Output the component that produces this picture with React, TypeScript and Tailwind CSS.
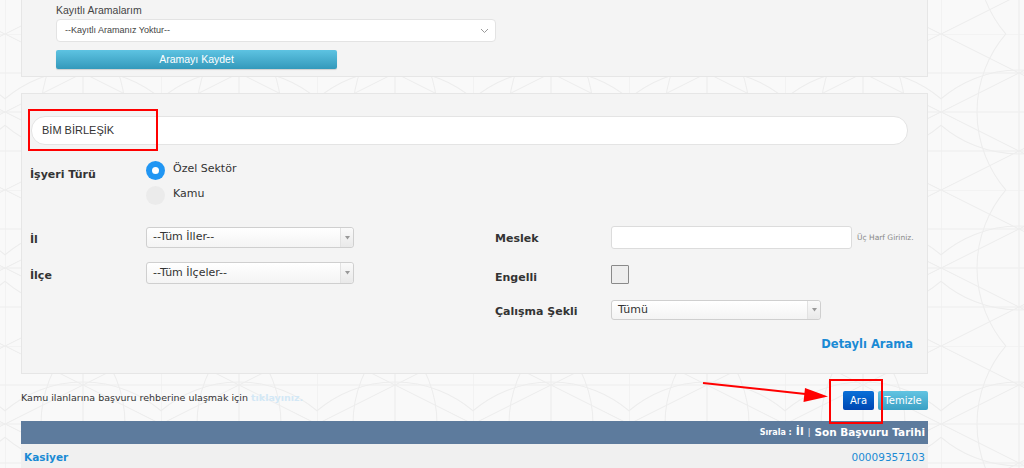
import React from "react";

const dv = { fontFamily: '"DejaVu Sans", Verdana, sans-serif' };
const ls = { fontFamily: '"Liberation Sans", Arial, sans-serif' };

function Bg() {
  return (
    <svg className="absolute inset-0 h-full w-full" width="1024" height="468">
      <defs>
        <pattern id="geo" width="156" height="156" patternUnits="userSpaceOnUse" x="5" y="34">
          <g fill="none" stroke="#ededed" strokeWidth="1.1">
            <line x1="0" y1="0" x2="156" y2="0" />
            <line x1="0" y1="39" x2="156" y2="39" />
            <line x1="0" y1="78" x2="156" y2="78" />
            <line x1="0" y1="117" x2="156" y2="117" />
            <line x1="0" y1="0" x2="0" y2="156" />
            <line x1="78" y1="0" x2="78" y2="156" />
            <line x1="0" y1="0" x2="156" y2="78" />
            <line x1="0" y1="78" x2="156" y2="156" />
            <line x1="0" y1="78" x2="156" y2="0" />
            <line x1="0" y1="156" x2="156" y2="78" />
            <circle cx="0" cy="78" r="120" />
            <circle cx="156" cy="78" r="120" />
            <circle cx="78" cy="0" r="120" />
            <circle cx="78" cy="156" r="120" />
          </g>
        </pattern>
      </defs>
      <rect width="1024" height="468" fill="#f9f9f9" />
      <rect width="1024" height="468" fill="url(#geo)" />
    </svg>
  );
}

function Select({ text, w }: { text: string; w: string }) {
  return (
    <div
      className={`${w} h-full flex items-center rounded-[3px] border border-[#cfcfcf] bg-gradient-to-b from-white to-[#f4f4f4]`}
    >
      <span className="flex-1 pl-[6px] text-[11px] text-[#333]" style={dv}>
        {text}
      </span>
      <span className="h-full w-[13px] border-l border-[#e2e2e2] flex items-center justify-center bg-gradient-to-b from-[#fafafa] to-[#e9e9e9] rounded-r-[3px]">
        <svg width="5" height="4" viewBox="0 0 5 4">
          <path d="M0 0 L5 0 L2.5 3.5 Z" fill="#999" />
        </svg>
      </span>
    </div>
  );
}

export default function App() {
  return (
    <div className="relative w-[1024px] h-[468px] overflow-hidden">
      <Bg />
      <div className="relative ml-[21px] w-[907px]">
        {/* Panel 1 */}
        <div className="h-[77px] border-x border-b border-[#e6e6e6] bg-[#f4f4f4] pl-[34px] pt-[3px]">
          <div className="text-[10.5px] leading-[15px] text-[#444]" style={ls}>
            Kayıtlı Aramalarım
          </div>
          <div className="mt-[1px] w-[440px] h-[23px] rounded-[4px] border border-[#e3e3e3] bg-white flex items-center pl-[8px] pr-[6px]">
            <span className="flex-1 text-[9px] text-[#444]" style={ls}>
              --Kayıtlı Aramanız Yoktur--
            </span>
            <svg width="9" height="6" viewBox="0 0 9 6">
              <path d="M1 1 L4.5 4.5 L8 1" fill="none" stroke="#999" strokeWidth="1" />
            </svg>
          </div>
          <div
            className="mt-[8px] w-[281px] h-[19px] rounded-[2px] bg-gradient-to-b from-[#5dc3e2] to-[#3399bb] flex items-center justify-center text-white text-[10.5px] shadow-[0_1px_1px_rgba(0,0,0,0.15)]"
            style={ls}
          >
            Aramayı Kaydet
          </div>
        </div>

        {/* Panel 2 */}
        <div className="mt-[16px] h-[281px] border border-[#e6e6e6] bg-[#f4f4f4] px-[8px] pt-[22px]">
          <div className="relative ml-[1px] w-[877px] h-[29px] rounded-[14px] border border-[#e4e4e4] bg-white flex items-center pl-[10px]">
            <span className="text-[11px] text-[#333]" style={ls}>
              BİM BİRLEŞİK
            </span>
            <div className="absolute left-[-4px] top-[-8px] w-[130px] h-[42px] border-[2.5px] border-[#ff0000]" />
          </div>

          {/* İşyeri Türü */}
          <div className="mt-[16px] flex">
            <div className="w-[116px] pt-[6px] text-[11px] font-bold text-[#333]" style={dv}>
              İşyeri Türü
            </div>
            <div className="flex flex-col gap-[6px]">
              <div className="flex items-center h-[19px]">
                <span className="w-[19px] h-[19px] rounded-full bg-[#2196f3] flex items-center justify-center">
                  <span className="w-[7px] h-[7px] rounded-full bg-white" />
                </span>
                <span className="ml-[8px] -mt-[3px] text-[11px] text-[#333]" style={dv}>
                  Özel Sektör
                </span>
              </div>
              <div className="flex items-center h-[19px]">
                <span className="w-[19px] h-[19px] rounded-full bg-[#ebebeb]" />
                <span className="ml-[8px] -mt-[3px] text-[11px] text-[#333]" style={dv}>
                  Kamu
                </span>
              </div>
            </div>
          </div>

          {/* Row A */}
          <div className="mt-[21px] flex h-[23px] items-center">
            <div className="w-[465px] flex items-center h-full">
              <div className="w-[116px] pt-[5px] text-[11px] font-bold text-[#333]" style={dv}>
                İl
              </div>
              <div className="h-[21px]">
                <Select text="--Tüm İller--" w="w-[208px]" />
              </div>
            </div>
            <div className="flex items-center h-full">
              <div className="w-[116px] pt-[4px] text-[11px] font-bold text-[#333]" style={dv}>
                Meslek
              </div>
              <div className="w-[241px] h-[23px] rounded-[3px] border border-[#dcdcdc] bg-white" />
              <span className="ml-[5px] text-[7.5px] text-[#888]" style={dv}>
                Üç Harf Giriniz.
              </span>
            </div>
          </div>

          {/* Row B */}
          <div className="mt-[13px] flex h-[22px] items-center">
            <div className="w-[465px] flex items-center h-full">
              <div className="w-[116px] pt-[6px] text-[11px] font-bold text-[#333]" style={dv}>
                İlçe
              </div>
              <div className="h-[22px]">
                <Select text="--Tüm İlçeler--" w="w-[208px]" />
              </div>
            </div>
            <div className="flex items-center h-full">
              <div className="w-[116px] pt-[10px] text-[11px] font-bold text-[#333]" style={dv}>
                Engelli
              </div>
              <div className="mt-[3px] w-[18px] h-[19px] border-[1.5px] border-[#8a8a8a] bg-[#eeeeee] rounded-[1px]" />
            </div>
          </div>

          {/* Row C */}
          <div className="mt-[16px] flex h-[20px] items-center">
            <div className="w-[465px]" />
            <div className="flex items-center h-full">
              <div className="w-[116px] pt-[4px] text-[11px] font-bold text-[#333]" style={dv}>
                Çalışma Şekli
              </div>
              <div className="h-[20px]">
                <Select text="Tümü" w="w-[210px]" />
              </div>
            </div>
          </div>

          {/* Detaylı Arama */}
          <div className="mt-[16px] flex justify-end pr-[6px]">
            <span className="text-[11.5px] leading-[16px] font-bold text-[#1a8ad4]" style={dv}>
              Detaylı Arama
            </span>
          </div>
        </div>

        {/* Bottom bar */}
        <div className="relative mt-[17px] flex h-[19px] items-center justify-between">
          <div className="-mt-[4px] text-[9.5px] text-[#333]" style={dv}>
            Kamu ilanlarına başvuru rehberine ulaşmak için{" "}
            <span className="font-bold text-[#d3e8f6]">tıklayınız.</span>
          </div>
          <div className="relative flex gap-[4px] h-full">
            <div
              className="w-[31px] h-full rounded-[2px] bg-gradient-to-b from-[#0a70d8] to-[#0046b2] text-white text-[10px] flex items-center justify-center"
              style={dv}
            >
              Ara
            </div>
            <div
              className="w-[50px] h-full rounded-[2px] bg-gradient-to-b from-[#62c4e2] to-[#3aa0c4] text-white text-[10px] flex items-center justify-center"
              style={dv}
            >
              Temizle
            </div>
            <div className="absolute left-[-14px] top-[-12px] w-[54px] h-[45px] border-[2.5px] border-[#ff0000]" />
          </div>
        </div>

        {/* Table header */}
        <div className="mt-[11px] h-[23px] bg-[#5d7b9d] flex items-center justify-end pr-[3px] text-white" style={dv}>
          <span className="text-[8px] font-bold">Sırala :</span>
          <span className="ml-[4px] text-[11px] font-bold">İl</span>
          <span className="mx-[4px] text-[8px]">|</span>
          <span className="text-[10.5px] font-bold">Son Başvuru Tarihi</span>
        </div>
        <div className="h-[24px] bg-[#f0f0f0] flex items-center justify-between px-[3px] pt-[3px]" style={dv}>
          <span className="text-[10.5px] font-bold text-[#1a8ad4]">Kasiyer</span>
          <span className="text-[10.5px] text-[#1a8ad4]">00009357103</span>
        </div>
      </div>

      {/* Red arrow annotation */}
      <svg className="absolute left-0 top-0" width="1024" height="468" style={{ pointerEvents: "none" }}>
        <line x1="703" y1="383" x2="810" y2="394.5" stroke="#ff0000" strokeWidth="2" />
        <path d="M828 396.5 L805 388 L803.5 402 Z" fill="#ff0000" />
      </svg>
    </div>
  );
}
